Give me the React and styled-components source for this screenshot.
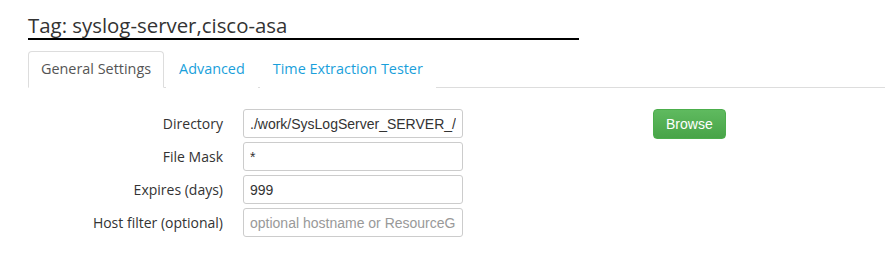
import React from 'react';
import styled, { createGlobalStyle } from 'styled-components';

const GlobalStyle = createGlobalStyle`
  html, body {
    margin: 0;
    background: #fff;
    font-family: 'Open Sans', 'Noto Sans', sans-serif;
    color: #333;
  }
`;

const Page = styled.div`
  padding: 12px 0 0 28px;
`;

const Title = styled.h3`
  display: inline-block;
  margin: 0;
  width: 551px;
  font-size: 20.4px;
  font-weight: 400;
  line-height: 26px;
  color: #333;
  border-bottom: 2px solid #000;
`;

const Tabs = styled.ul`
  display: flex;
  list-style: none;
  margin: 11px 0 0;
  padding: 0;
  border-bottom: 1px solid #ddd;
`;

const Tab = styled.li`
  margin: 0 2px -1px 0;
  padding: 8px 12px 9px;
  font-size: 14.4px;
  line-height: 18px;
  border: 1px solid ${p => (p.$active ? '#ddd' : 'transparent')};
  border-bottom-color: ${p => (p.$active ? '#fff' : 'transparent')};
  border-radius: 4px 4px 0 0;
  color: ${p => (p.$active ? '#555' : '#1a9fdb')};
  background: #fff;
`;

const Body = styled.div`
  display: flex;
  padding-top: 21px;
`;

const Form = styled.div`
  display: grid;
  grid-template-columns: 195px 220px;
  column-gap: 20px;
  row-gap: 4px;
  align-items: center;
`;

const Label = styled.label`
  text-align: right;
  font-size: 14px;
  color: #333;
`;

const Input = styled.input`
  box-sizing: border-box;
  height: 29px;
  width: 220px;
  padding: 4px 6px;
  border: 1px solid #ccc;
  border-radius: 3px;
  font-family: 'Liberation Sans', Arial, sans-serif;
  font-size: 14px;
  color: #333;
  outline: none;
  &::placeholder { color: #999; }
`;

const Button = styled.button`
  align-self: flex-start;
  margin: 0 0 0 190px;
  height: 30px;
  padding: 0 12px;
  border: 1px solid #4cae4c;
  border-radius: 4px;
  background: linear-gradient(#5fba5f, #48a448);
  color: #fff;
  font-family: 'Liberation Sans', Arial, sans-serif;
  font-size: 14px;
`;

const fields = [
  ['Directory', './work/SysLogServer_SERVER_/', ''],
  ['File Mask', '*', ''],
  ['Expires (days)', '999', ''],
  ['Host filter (optional)', '', 'optional hostname or ResourceGroup'],
];

export default function App() {
  return (
    <Page>
      <GlobalStyle />
      <Title>Tag: syslog-server,cisco-asa</Title>
      <Tabs>
        <Tab $active>General Settings</Tab>
        <Tab>Advanced</Tab>
        <Tab>Time Extraction Tester</Tab>
      </Tabs>
      <Body>
        <Form>
          {fields.map(([label, value, ph]) => (
            <React.Fragment key={label}>
              <Label>{label}</Label>
              <Input defaultValue={value} placeholder={ph} />
            </React.Fragment>
          ))}
        </Form>
        <Button>Browse</Button>
      </Body>
    </Page>
  );
}
